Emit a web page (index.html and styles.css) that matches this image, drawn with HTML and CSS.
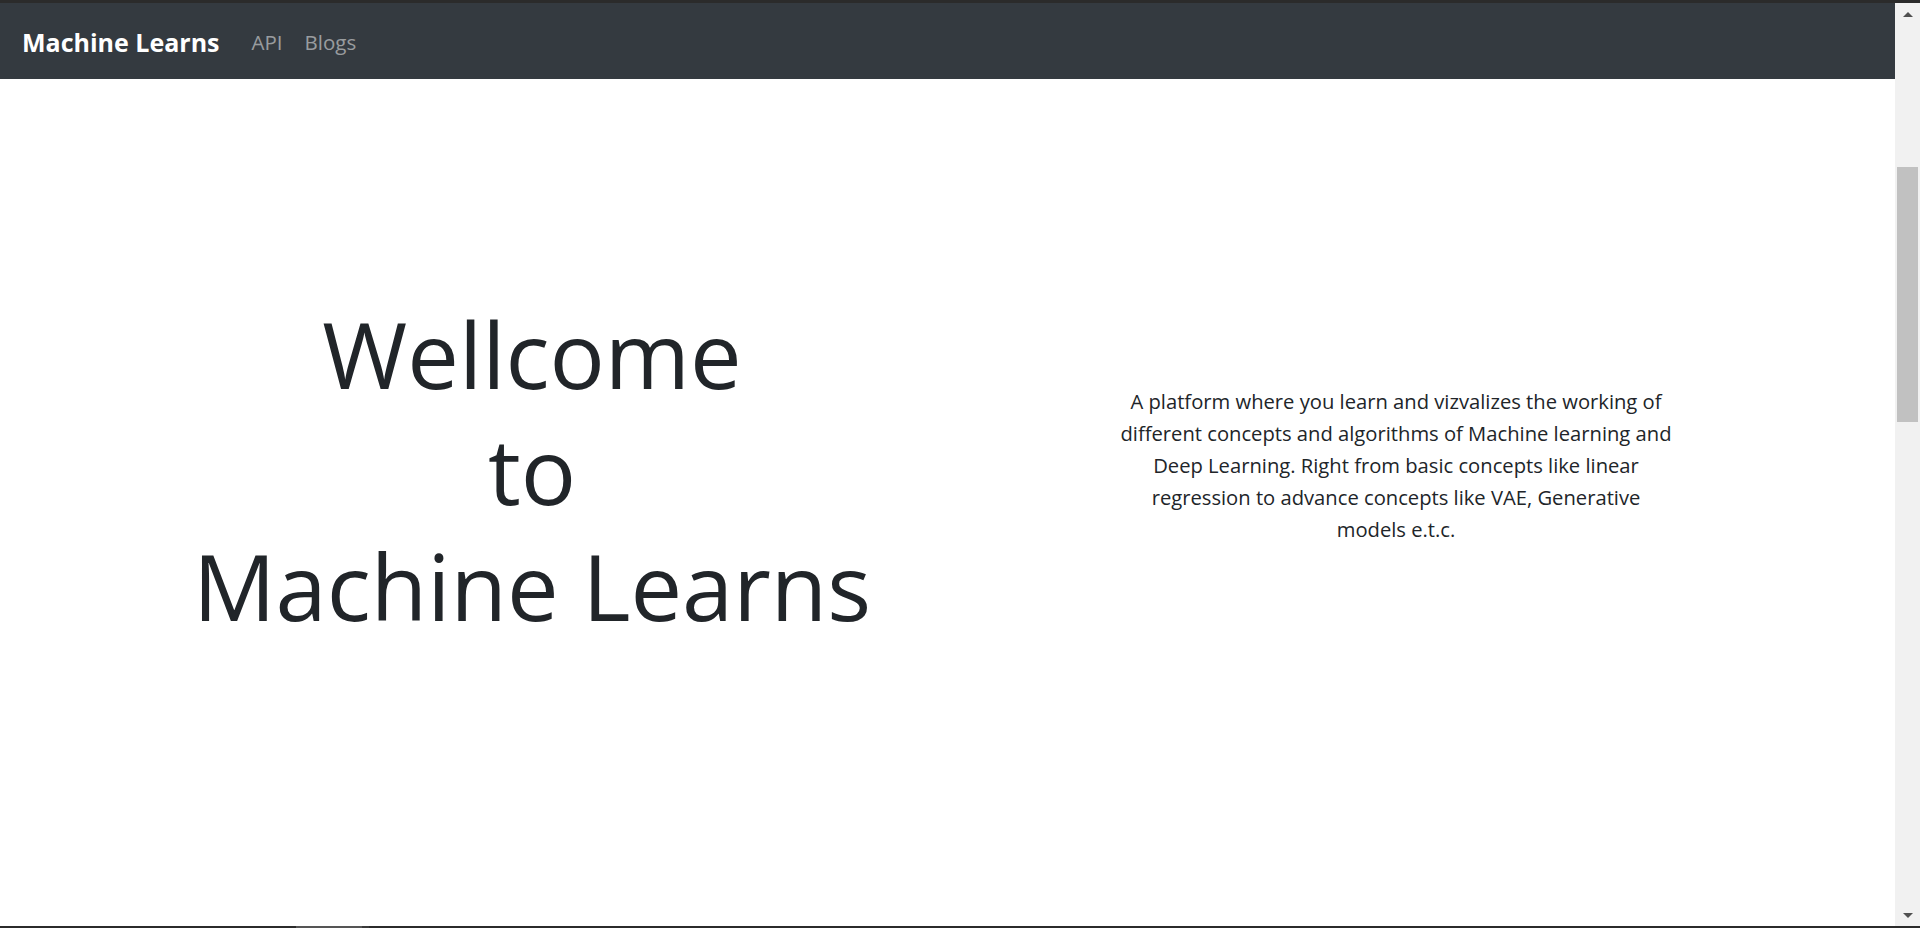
FILE: index.html
```html
<!DOCTYPE html>
<html lang="en">
<head>
<meta charset="utf-8">
<title>Machine Learns</title>
<link rel="stylesheet" href="styles.css">
</head>
<body>
<div class="topstrip"></div>
<div class="window">
  <div class="page">
    <nav class="navbar">
      <a class="brand" href="#">Machine Learns</a>
      <ul class="nav-links">
        <li><a href="#">API</a></li>
        <li><a href="#">Blogs</a></li>
      </ul>
    </nav>
    <main class="hero">
      <div class="hero-col">
        <h1 class="display">Wellcome<br>to<br>Machine Learns</h1>
      </div>
      <div class="hero-col">
        <p class="lead">A platform where you learn and vizvalizes the working of different concepts and algorithms of Machine learning and Deep Learning. Right from basic concepts like linear regression to advance concepts like VAE, Generative models e.t.c.</p>
      </div>
    </main>
  </div>
  <div class="scrollbar">
    <div class="sb-btn"><span class="arrow-up"></span></div>
    <div class="sb-track">
      <div class="sb-thumb"></div>
    </div>
    <div class="sb-btn"><span class="arrow-down"></span></div>
  </div>
</div>
<div class="bottomstrip"><span class="bs-seg"></span><span class="bs-seg2"></span></div>
</body>
</html>
```
FILE: styles.css
```css
* { box-sizing: border-box; }
html, body { margin: 0; padding: 0; }
body {
  width: 1920px;
  height: 928px;
  overflow: hidden;
  display: flex;
  flex-direction: column;
  font-family: "Open Sans", "Noto Sans", "Liberation Sans", sans-serif;
  color: #212529;
  background: #fff;
}
.topstrip { height: 3px; background: #2b2b2b; flex: none; }
.window { flex: 1; display: flex; min-height: 0; }
.page { flex: 1; display: flex; flex-direction: column; }
.navbar {
  height: 76px;
  flex: none;
  background: #343a40;
  display: flex;
  align-items: center;
  padding-left: 22px;
  padding-top: 2px;
}
.brand {
  color: #fff;
  font-weight: 700;
  font-size: 25px;
  text-decoration: none;
  margin-right: 32px;
}
.nav-links { list-style: none; margin: 0; padding: 0; display: flex; gap: 22px; }
.nav-links a {
  color: rgba(255,255,255,0.5);
  text-decoration: none;
  font-size: 20.5px;
}
.hero {
  flex: 1;
  display: grid;
  grid-template-columns: 864px 864px;
  padding-left: 100px;
  align-items: center;
  padding-bottom: 65px;
}
.hero-col { display: flex; justify-content: center; text-align: center; }
.display {
  margin: 0;
  font-weight: 400;
  font-size: 92px;
  line-height: 116px;
}
.lead {
  margin: 0 0 10px;
  font-size: 20.2px;
  line-height: 32px;
  max-width: 558px;
}
.scrollbar {
  width: 25px;
  flex: none;
  background: #f1f1f1;
  display: flex;
  flex-direction: column;
}
.sb-btn { height: 17px; display: flex; align-items: center; justify-content: center; flex: none; }
.arrow-up, .arrow-down { width: 0; height: 0; border-left: 5.5px solid transparent; border-right: 5.5px solid transparent; }
.arrow-up { border-bottom: 5px solid #505050; margin-top: 5px; }
.arrow-down { border-top: 5px solid #505050; margin-bottom: 5px; }
.sb-track { flex: 1; padding: 147px 2px 0 2px; }
.sb-thumb { height: 255px; background: #c1c1c1; }
.bottomstrip { height: 2px; flex: none; background: #2b2b2b; display: flex; padding-left: 296px; }
.bs-seg { width: 66px; background: #555; }
.bs-seg2 { width: 7px; background: #3a3a3a; }
```
